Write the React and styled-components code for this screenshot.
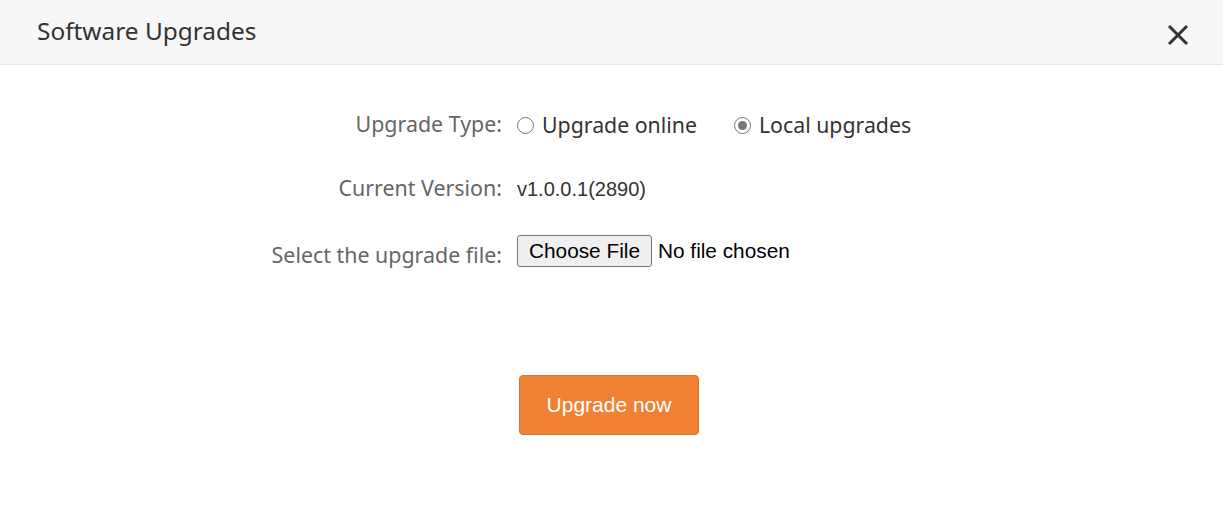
import React, { useState } from "react";
import styled, { createGlobalStyle } from "styled-components";

const GlobalStyle = createGlobalStyle`
  html, body {
    margin: 0;
    padding: 0;
    background: #fff;
  }
  body {
    font-family: "Noto Sans", "Open Sans", sans-serif;
  }
`;

const Dialog = styled.div`
  width: 1223px;
  height: 505px;
  background: #fff;
  display: flex;
  flex-direction: column;
`;

const Header = styled.div`
  height: 65px;
  box-sizing: border-box;
  background: #f7f7f7;
  border-bottom: 1px solid #e6e6e6;
  display: flex;
  align-items: center;
  justify-content: space-between;
  padding: 0 33px 0 37px;
`;

const Title = styled.h1`
  margin: 0;
  font-weight: 400;
  font-size: 24.4px;
  color: #333;
  margin-top: -4px;
`;

const CloseBtn = styled.button`
  border: none;
  background: none;
  padding: 0;
  width: 24px;
  height: 24px;
  display: flex;
  align-items: center;
  justify-content: center;
  cursor: pointer;
  margin-top: 6px;
`;

const Form = styled.div`
  display: grid;
  grid-template-columns: 502px auto;
  column-gap: 15px;
  padding-top: 40px;
`;

const Label = styled.div`
  text-align: right;
  font-size: 21.4px;
  color: #666;
  height: 64px;
  line-height: ${(p) => p.$lh || 38}px;
`;

const Field = styled.div`
  height: 64px;
  display: flex;
  align-items: flex-start;
`;

const RadioOption = styled.label`
  display: flex;
  align-items: center;
  gap: 8px;
  margin-right: 37px;
  font-size: 21.3px;
  color: #333;
  line-height: 40px;
  cursor: pointer;
`;

const RadioDot = styled.span`
  width: 17px;
  height: 17px;
  border-radius: 50%;
  border: 1px solid #777;
  box-sizing: border-box;
  display: flex;
  align-items: center;
  justify-content: center;
  margin-top: 1px;
  &::after {
    content: "";
    width: 9px;
    height: 9px;
    border-radius: 50%;
    background: ${(p) => (p.$checked ? "#777" : "transparent")};
  }
`;

const Version = styled.div`
  font-family: "Liberation Sans", Arial, sans-serif;
  font-size: 20px;
  color: #333;
  line-height: 40px;
`;

const FileBtn = styled.button`
  font-family: "Liberation Sans", Arial, sans-serif;
  font-size: 20.8px;
  color: #000;
  background: #efefef;
  border: 1px solid #767676;
  border-radius: 3px;
  height: 32px;
  padding: 0 11px;
  margin-top: 2px;
`;

const FileText = styled.span`
  font-family: "Liberation Sans", Arial, sans-serif;
  font-size: 20.8px;
  color: #000;
  margin-left: 6px;
  line-height: 36px;
`;

const Footer = styled.div`
  display: flex;
  padding-left: 519px;
  padding-top: 78px;
`;

const PrimaryBtn = styled.button`
  width: 180px;
  height: 60px;
  background: #f08133;
  border: 1px solid #e07428;
  border-radius: 4px;
  color: #fff;
  font-family: "Liberation Sans", Arial, sans-serif;
  font-size: 21px;
  cursor: pointer;
`;

export default function App() {
  const [type, setType] = useState("local");
  return (
    <>
      <GlobalStyle />
      <Dialog>
        <Header>
          <Title>Software Upgrades</Title>
          <CloseBtn aria-label="close">
            <svg width="22" height="22" viewBox="0 0 22 22">
              <path d="M2 2 L20 20 M20 2 L2 20" stroke="#333" strokeWidth="3" />
            </svg>
          </CloseBtn>
        </Header>
        <Form>
          <Label>Upgrade Type:</Label>
          <Field>
            <RadioOption onClick={() => setType("online")}>
              <RadioDot $checked={type === "online"} />
              Upgrade online
            </RadioOption>
            <RadioOption onClick={() => setType("local")}>
              <RadioDot $checked={type === "local"} />
              Local upgrades
            </RadioOption>
          </Field>
          <Label>Current Version:</Label>
          <Field>
            <Version>v1.0.0.1(2890)</Version>
          </Field>
          <Label $lh={44}>Select the upgrade file:</Label>
          <Field>
            <FileBtn>Choose File</FileBtn>
            <FileText>No file chosen</FileText>
          </Field>
        </Form>
        <Footer>
          <PrimaryBtn>Upgrade now</PrimaryBtn>
        </Footer>
      </Dialog>
    </>
  );
}
